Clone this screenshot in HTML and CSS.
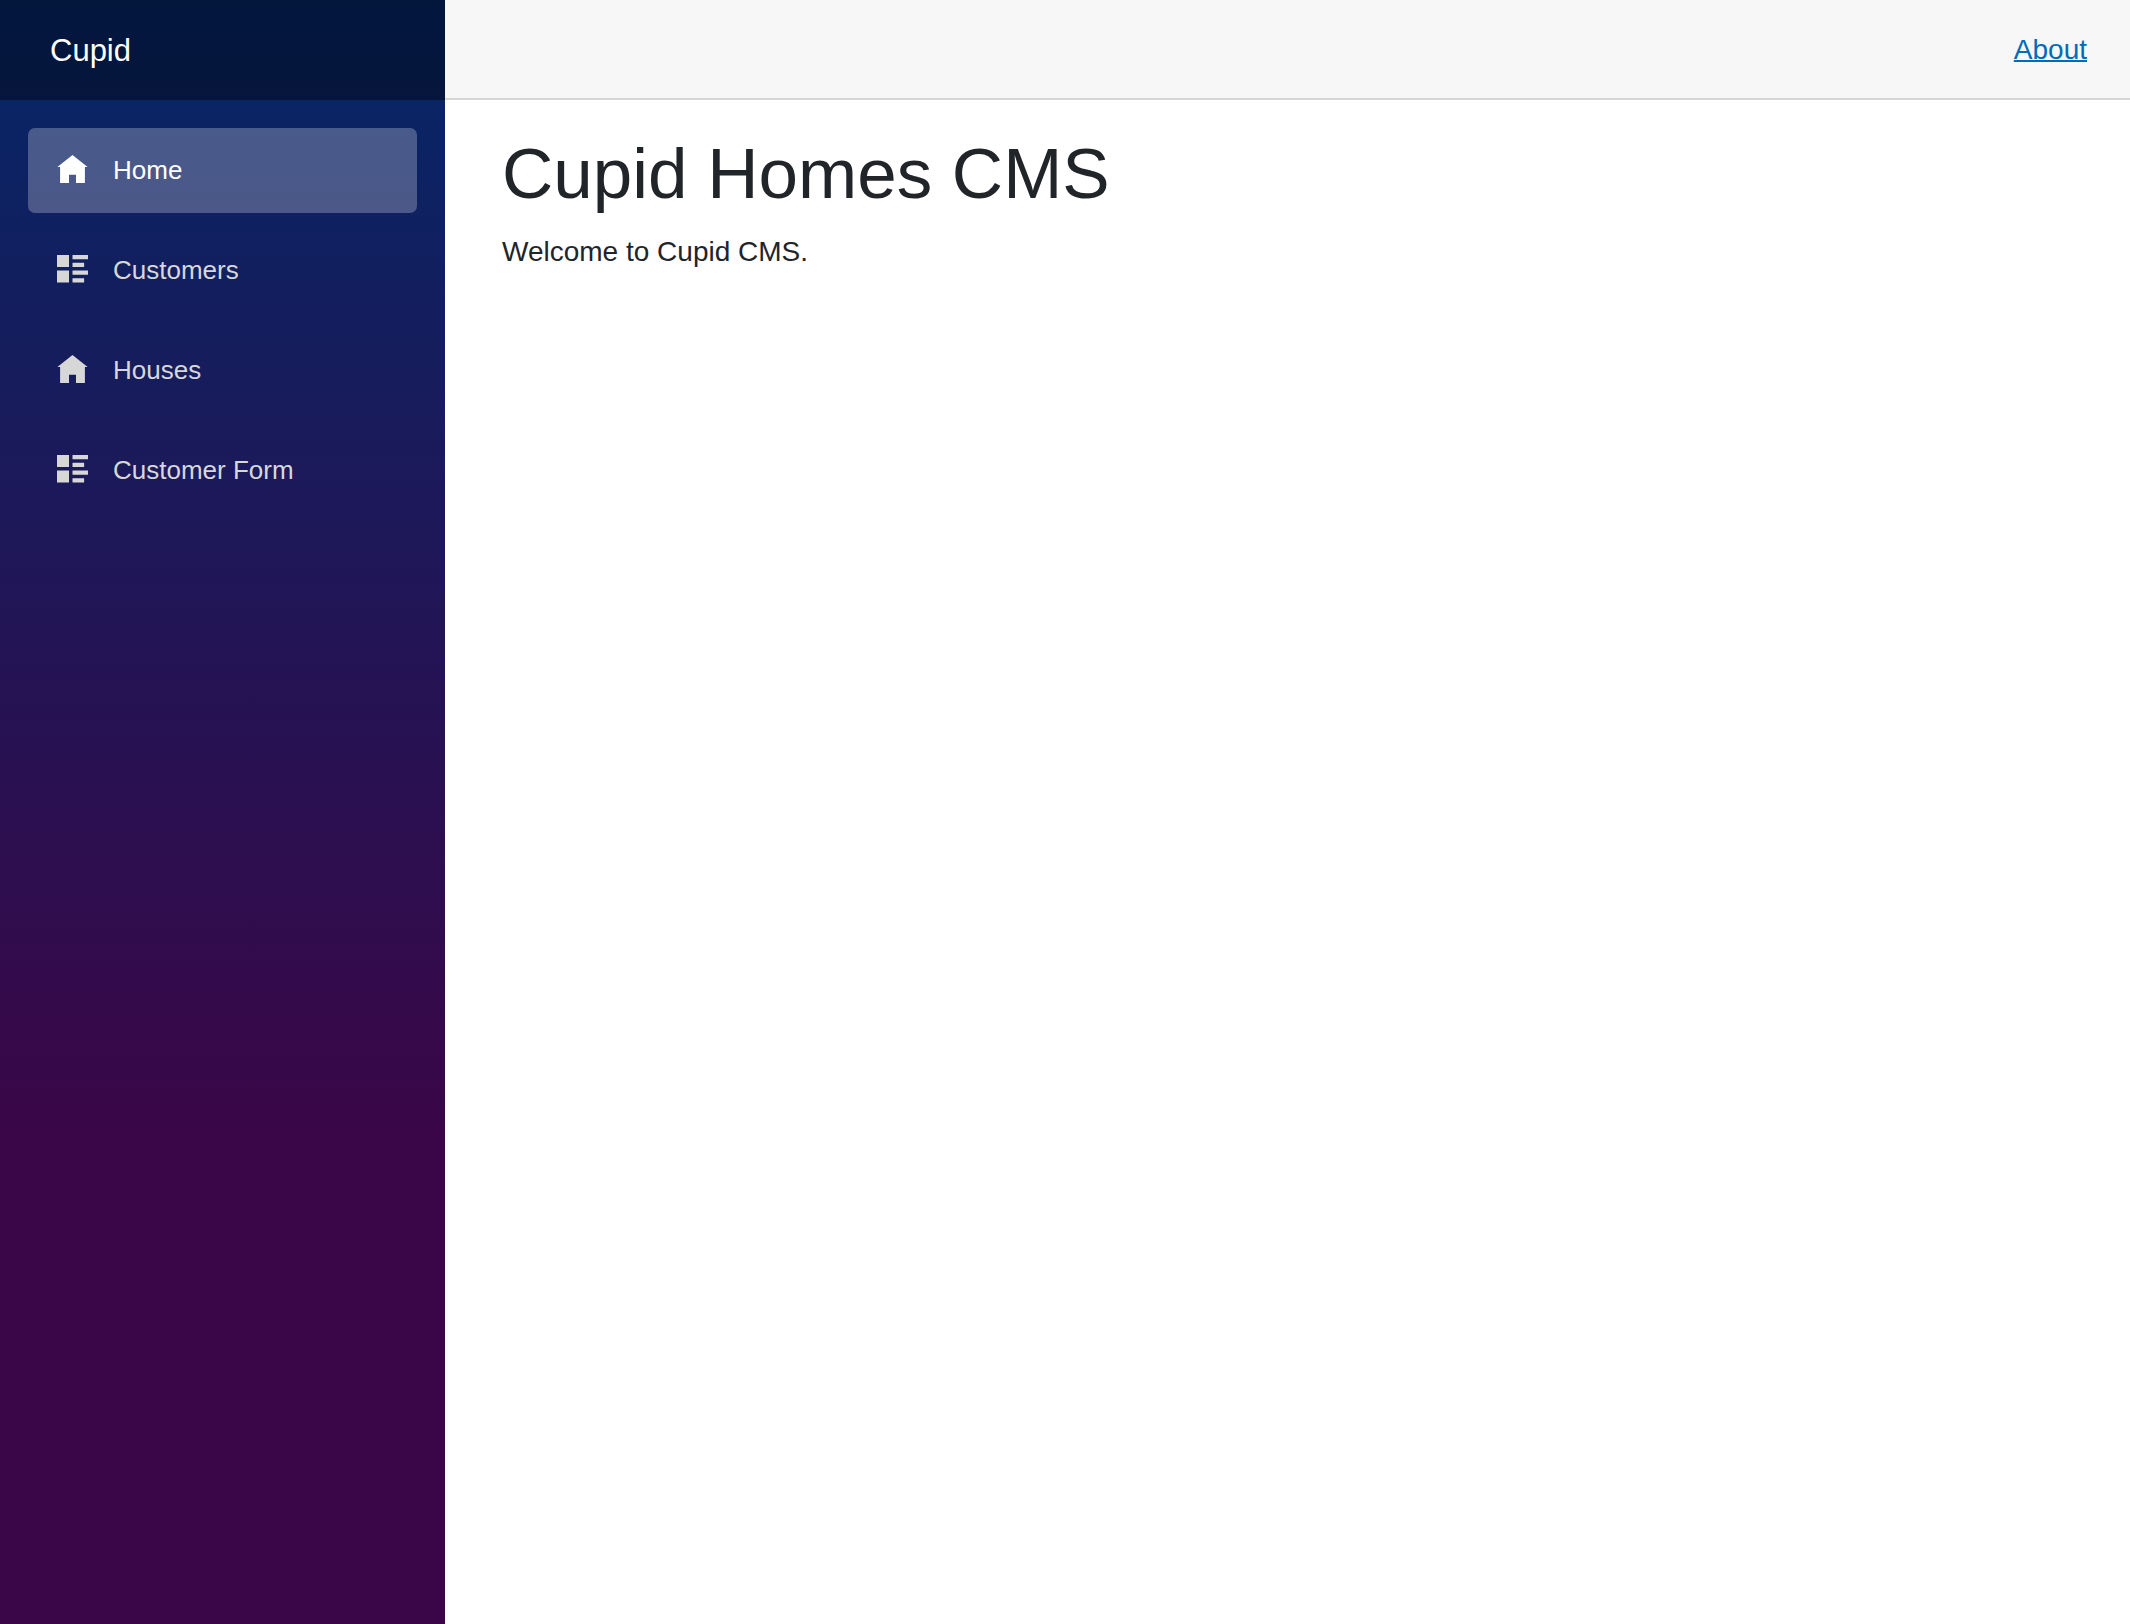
FILE: index.html
```html
<!DOCTYPE html>
<html lang="en">
<head>
  <meta charset="utf-8">
  <meta name="viewport" content="width=device-width, initial-scale=1">
  <title>Cupid Homes CMS</title>
  <link rel="stylesheet" href="styles.css">
</head>
<body>
  <div class="page">
    <div class="sidebar">
      <div class="brand-row">
        <a class="brand" href="#">Cupid</a>
      </div>
      <nav class="nav">
        <a class="nav-link active" href="#" aria-current="page">
          <svg class="icon" viewBox="0 0 8 8" aria-hidden="true"><path d="M4 0L.1 3.1H.8V7.2H3.1V5.1H4.9V7.2H7.2V3.1H7.9z"/></svg>
          <span>Home</span>
        </a>
        <a class="nav-link" href="#customers">
          <svg class="icon" viewBox="0 0 8 8" aria-hidden="true"><path d="M0 0v3.1h3.1v-3.1zM4 0v1.1h4v-1.1zM4 2v1.1h3v-1.1zM0 4v3.1h3.1v-3.1zM4 4v1.1h4v-1.1zM4 6v1.1h3v-1.1z"/></svg>
          <span>Customers</span>
        </a>
        <a class="nav-link" href="#houses">
          <svg class="icon" viewBox="0 0 8 8" aria-hidden="true"><path d="M4 0L.1 3.1H.8V7.2H3.1V5.1H4.9V7.2H7.2V3.1H7.9z"/></svg>
          <span>Houses</span>
        </a>
        <a class="nav-link" href="#customer-form">
          <svg class="icon" viewBox="0 0 8 8" aria-hidden="true"><path d="M0 0v3.1h3.1v-3.1zM4 0v1.1h4v-1.1zM4 2v1.1h3v-1.1zM0 4v3.1h3.1v-3.1zM4 4v1.1h4v-1.1zM4 6v1.1h3v-1.1z"/></svg>
          <span>Customer Form</span>
        </a>
      </nav>
    </div>
    <main class="main">
      <div class="top-row">
        <a class="about" href="#about">About</a>
      </div>
      <article class="content">
        <h1 class="title">Cupid Homes CMS</h1>
        <p class="lead">Welcome to Cupid CMS.</p>
      </article>
    </main>
  </div>
</body>
</html>
```
FILE: styles.css
```css
* {
  box-sizing: border-box;
}

body {
  margin: 0;
  font-family: "Liberation Sans", Arial, sans-serif;
  font-size: 28px;
  line-height: 43px;
  color: #212529;
  background: #fff;
}

.page {
  display: flex;
  min-height: 100vh;
}

.sidebar {
  flex: 0 0 445px;
  background-image: linear-gradient(180deg, rgb(5, 39, 103) 0%, #3a0647 70%);
}

.brand-row {
  display: flex;
  align-items: center;
  height: 100px;
  padding: 0 50px;
  background: rgba(0, 0, 0, 0.4);
}

.brand {
  font-size: 31px;
  color: #fff;
  text-decoration: none;
}

.nav {
  display: flex;
  flex-direction: column;
  gap: 15px;
  padding: 28px;
}

.nav-link {
  display: flex;
  align-items: center;
  gap: 25px;
  height: 85px;
  padding: 0 29px;
  border-radius: 7px;
  font-size: 26px;
  color: #d7d7d7;
  text-decoration: none;
}

.nav-link.active {
  background: rgba(255, 255, 255, 0.25);
  color: #fff;
}

.icon {
  width: 31px;
  height: 31px;
  fill: currentColor;
}

.main {
  flex: 1;
}

.top-row {
  display: flex;
  align-items: center;
  justify-content: flex-end;
  height: 100px;
  padding: 0 43px;
  background: #f7f7f7;
  border-bottom: 2px solid #d6d5d5;
}

.about {
  color: #006bb7;
  text-decoration-thickness: 2px;
}

.content {
  padding: 31px 57px;
}

.title {
  margin: 0 0 14px;
  font-size: 71px;
  font-weight: 400;
  line-height: 85px;
}

.lead {
  margin: 0;
}
```
